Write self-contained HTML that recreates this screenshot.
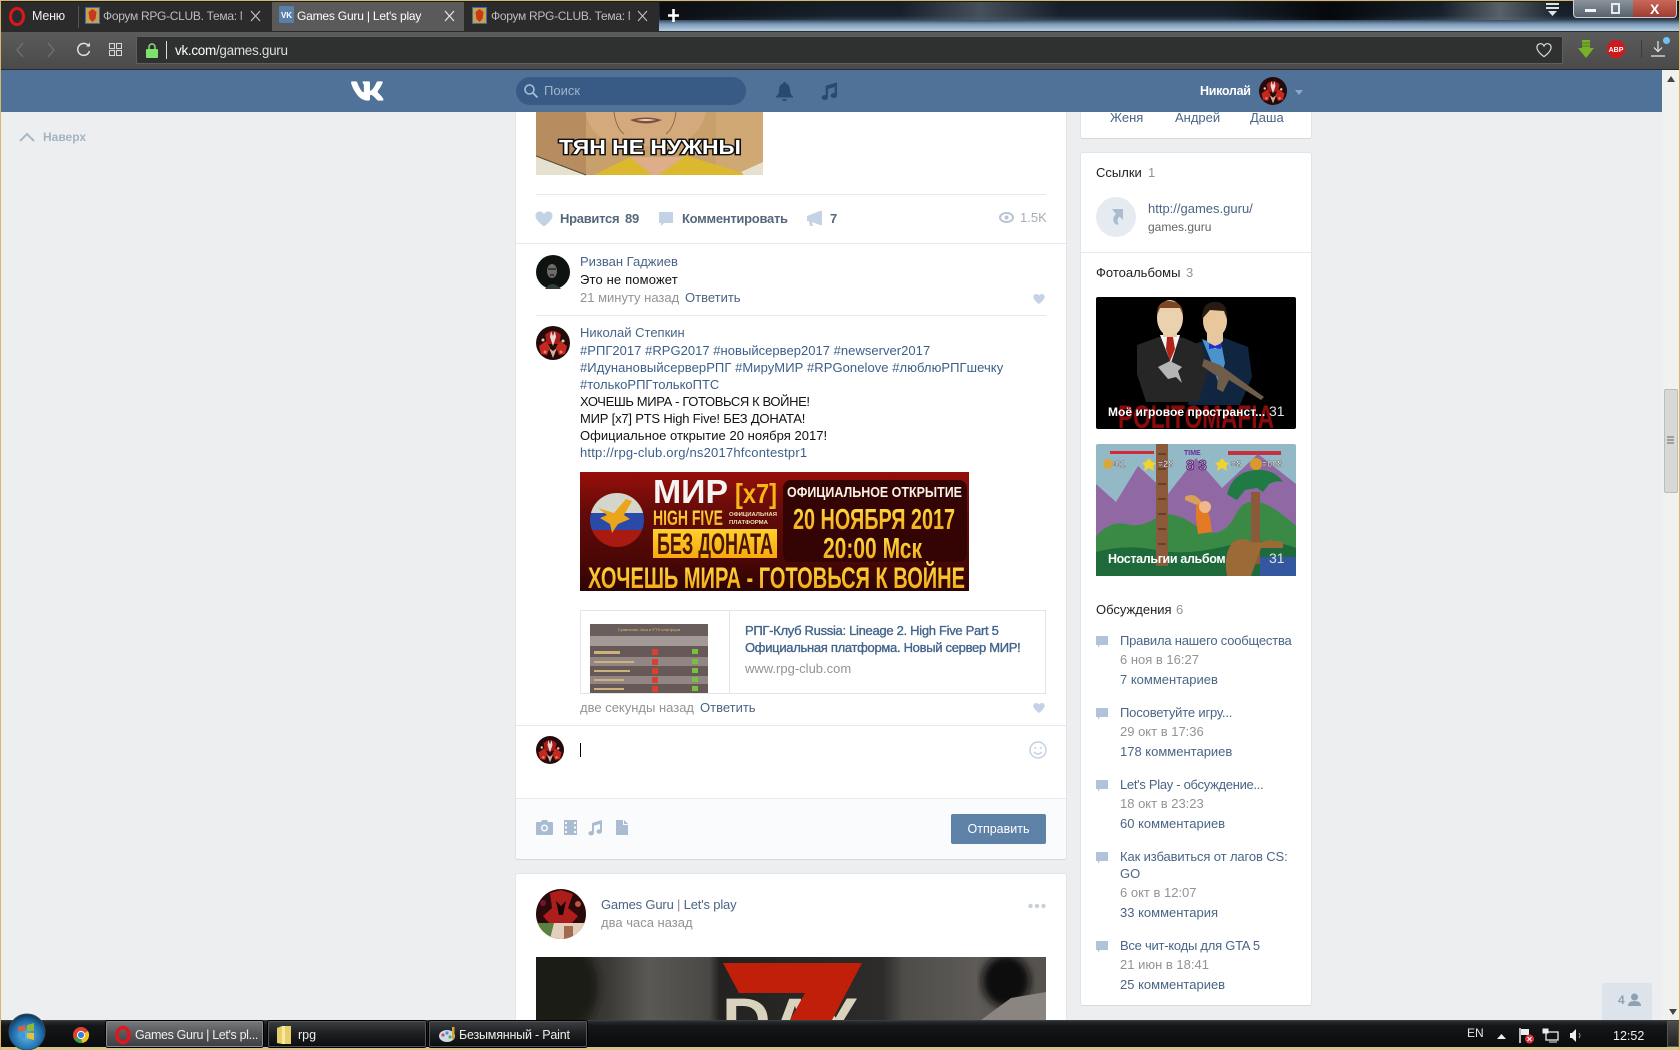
<!DOCTYPE html>
<html lang="ru"><head><meta charset="utf-8"><title>Games Guru | Let's play</title>
<style>
html,body{margin:0;padding:0;width:1680px;height:1050px;overflow:hidden;background:#edeef0}
body{position:relative;font-family:"Liberation Sans","Noto Sans CJK SC",sans-serif;font-size:13px;color:#000}
.a{position:absolute;white-space:nowrap;line-height:16px}
.b{position:absolute}
.l{color:#3b5f88}.n{color:#4a6586}.g{color:#939393}.d{color:#55677d;font-weight:bold;letter-spacing:-.28px}
.tab{position:absolute;top:2px;height:29px;background:#2b2b2b}
.tt{position:absolute;top:7px;font-size:12px;line-height:16px;color:#bdbdbd;white-space:nowrap;letter-spacing:-.2px}
.hr{position:absolute;height:1px;background:#e7e8ec}
.card{position:absolute;background:#fff;box-shadow:0 1px 0 0 #d7d8db,0 0 0 1px #e3e4e8;border-radius:2px}
svg{position:absolute;display:block;overflow:visible}
.tk{position:absolute;top:1021px;height:26px;border-radius:2px;box-shadow:inset 0 0 0 1px #555,0 0 0 1px #000;background:linear-gradient(#3c4044,#1c1e20 50%,#0b0c0d)}
</style></head><body>

<svg width="0" height="0" style="left:0;top:0"><defs>
<symbol id="av" viewBox="0 0 34 34">
<circle cx="17" cy="17" r="17" fill="#240a0a"/>
<path d="M9 9q8-8 16 0l-2 9H11z" fill="#a81d1b"/>
<path d="M15 5l2 5 2-5 1 6-3 9-3-9z" fill="#e9d9d2"/>
<path d="M3 20l7-5 4 6-3 8-6-1zM31 20l-7-5-4 6 3 8 6-1z" fill="#c5281f"/>
<path d="M13 22l4 10 4-10-4 3z" fill="#d8aa98"/>
<circle cx="7" cy="14" r="1.500" fill="#e9c3b5"/><circle cx="27" cy="15" r="1.500" fill="#e9c3b5"/><circle cx="9" cy="26" r="1.500" fill="#f0806a"/><circle cx="25" cy="26" r="1.500" fill="#f0806a"/>
</symbol>
<path id="hh" d="M12 22S2 15 .8 9C0 4 3.500 2 6.500 2 9 2 11 3.500 12 5.500 13 3.500 15 2 17.500 2 20.500 2 24 4 23.200 9 22 15 12 22 12 22z"/>
</defs></svg>

<!-- page area -->
<div class="b" style="left:0;top:112px;width:1662px;height:908px;background:#edeef0"></div>
<div class="b" style="left:0;top:0;width:1px;height:1050px;background:#d8b868;z-index:9"></div>

<!-- left 'up' -->
<svg style="left:19px;top:132px" width="16" height="10" viewBox="0 0 16 10"><path d="M1 9L8 2l7 7" fill="none" stroke="#a9b8c9" stroke-width="2"/></svg>
<div class="a" style="left:43px;top:129px;font-size:12px;font-weight:bold;color:#a3b3c5">Наверх</div>

<!-- main card -->
<div class="card" style="left:516px;top:100px;width:550px;height:759px"></div>
<div class="b" style="left:516px;top:799px;width:550px;height:60px;background:#fafbfc;border-radius:0 0 2px 2px"></div>
<div class="hr" style="left:516px;top:798px;width:550px"></div>
<div class="hr" style="left:516px;top:725px;width:550px"></div>
<div class="hr" style="left:516px;top:243px;width:550px"></div>
<div class="hr" style="left:536px;top:194px;width:510px"></div>
<div class="hr" style="left:536px;top:315px;width:510px"></div>

<!-- meme -->
<svg style="left:536px;top:112px" width="227" height="63" viewBox="0 0 227 63">
<rect width="227" height="63" fill="#c8a06c"/>
<rect x="0" y="0" width="50" height="63" fill="#b78d5f"/>
<rect x="180" y="0" width="47" height="63" fill="#cfa874"/>
<path d="M50 0q2 22 30 34h60q26-12 30-34z" fill="#d4a97c"/>
<path d="M78 0q2 16 10 22M140 0q-2 16-10 22" fill="none" stroke="#8e6a48" stroke-width="1"/>
<path d="M94 8q16-5 32 0q-16 7-32 0z" fill="#7a5040"/><path d="M100 8q10 2 20 0q-10-2-20 0z" fill="#e9d3ba"/>
<path d="M0 44l50 19H0z" fill="#e6e1cf"/><path d="M205 60l22-10v13h-22z" fill="#e6e1cf"/>
<path d="M0 44l50 19" fill="none" stroke="#54483a"/>
<path d="M58 63l36-18 22 18z" fill="#dcb82e"/><path d="M122 63l26-20 59 18v2z" fill="#dcb82e"/>
<path d="M94 45h54l-26 18h-6z" fill="#deae8a"/>
<text x="114" y="42" text-anchor="middle" font-family="Liberation Sans" font-weight="bold" font-size="20" fill="#fff" stroke="#111" stroke-width="2.800" paint-order="stroke" textLength="182" lengthAdjust="spacingAndGlyphs">ТЯН НЕ НУЖНЫ</text>
</svg>

<!-- action row -->
<svg style="left:535px;top:210px" width="18" height="18" viewBox="0 0 24 24"><use href="#hh" fill="#c3d2e4"/></svg>
<div class="a d" style="left:560px;top:211px">Нравится</div>
<div class="a d" style="left:625px;top:211px">89</div>
<svg style="left:659px;top:212px" width="14" height="15" viewBox="0 0 14 15"><path d="M0 0h14v11H5l-3 3v-3H0z" fill="#c3d2e4"/></svg>
<div class="a d" style="left:682px;top:211px">Комментировать</div>
<svg style="left:807px;top:211px" width="15" height="15" viewBox="0 0 15 15"><path d="M0 5l13-5h2v14h-2L5 11l1 4H3L2 10H0z" fill="#c3d2e4"/></svg>
<div class="a d" style="left:830px;top:211px">7</div>
<svg style="left:999px;top:212px" width="15" height="11" viewBox="0 0 15 11"><ellipse cx="7.500" cy="5.500" rx="6.500" ry="4.500" fill="none" stroke="#b7c4d3" stroke-width="2"/><circle cx="7.500" cy="5.500" r="2" fill="#b7c4d3"/></svg>
<div class="a" style="left:1020px;top:210px;color:#a3adb8">1.5K</div>

<!-- comment 1 -->
<svg style="left:536px;top:255px" width="34" height="34" viewBox="0 0 34 34"><circle cx="17" cy="17" r="17" fill="#0e1211"/><ellipse cx="16" cy="16" rx="5" ry="7" fill="#6b6d66"/><path d="M12 14h8M14 20h4" stroke="#1c1c1c" stroke-width="1.300"/><path d="M9 34q7-10 16 0z" fill="#2f3d39"/></svg>
<div class="a n" style="left:580px;top:254px">Ризван Гаджиев</div>
<div class="a" style="left:580px;top:272px;letter-spacing:.15px;color:#111">Это не поможет</div>
<div class="a g" style="left:580px;top:290px">21 минуту назад</div>
<div class="a n" style="left:685px;top:290px">Ответить</div>
<svg style="left:1033px;top:293px" width="12" height="12" viewBox="0 0 24 24"><use href="#hh" fill="#c3d2e4"/></svg>

<!-- comment 2 -->
<svg style="left:536px;top:326px" width="34" height="34"><use href="#av" width="34" height="34"/></svg>
<div class="a n" style="left:580px;top:325px">Николай Степкин</div>
<div class="a l" style="left:580px;top:343px;letter-spacing:.03px">#РПГ2017 #RPG2017 #новыйсервер2017 #newserver2017</div>
<div class="a l" style="left:580px;top:360px;letter-spacing:.06px">#ИдунановыйсерверРПГ #МируМИР #RPGonelove #люблюРПГшечку</div>
<div class="a l" style="left:580px;top:377px">#толькоРПГтолькоПТС</div>
<div class="a" style="left:580px;top:394px;letter-spacing:-.38px;color:#111">ХОЧЕШЬ МИРА - ГОТОВЬСЯ К ВОЙНЕ!</div>
<div class="a" style="left:580px;top:411px;letter-spacing:-.2px;color:#111">МИР [x7] PTS High Five! БЕЗ ДОНАТА!</div>
<div class="a" style="left:580px;top:428px;letter-spacing:.03px;color:#111">Официальное открытие 20 ноября 2017!</div>
<div class="a l" style="left:580px;top:445px;letter-spacing:.2px">http://rpg-club.org/ns2017hfcontestpr1</div>

<!-- banner -->
<svg style="left:580px;top:472px" width="389" height="119" viewBox="0 0 389 119" font-family="Liberation Sans" font-weight="bold">
<defs>
<linearGradient id="bn" x1="0" y1="0" x2="0" y2="1"><stop offset="0" stop-color="#970f0a"/><stop offset=".35" stop-color="#620b08"/><stop offset=".75" stop-color="#4a0705"/><stop offset="1" stop-color="#2b0403"/></linearGradient>
<linearGradient id="go" x1="0" y1="0" x2="0" y2="1"><stop offset="0" stop-color="#ffe14a"/><stop offset="1" stop-color="#f0a00c"/></linearGradient>
<linearGradient id="gr" x1="0" y1="0" x2="0" y2="1"><stop offset="0" stop-color="#ffd12e"/><stop offset="1" stop-color="#f8a80c"/></linearGradient>
<clipPath id="gc"><circle cx="37" cy="48" r="27"/></clipPath>
</defs>
<rect width="389" height="119" fill="url(#bn)"/>
<g clip-path="url(#gc)">
<rect x="10" y="21" width="54" height="20" fill="#d5d6cb"/>
<rect x="10" y="41" width="54" height="17" fill="#2a49a8"/>
<rect x="10" y="58" width="54" height="17" fill="#a81a12"/>
<path d="M18 36l16 5 12-14 6 2-8 14 6 4-12 5-6 9-2-9-10-6 7-3z" fill="#eaa51a"/>
</g>
<text x="73" y="31" font-size="33" fill="#f4f4f4" textLength="75" lengthAdjust="spacingAndGlyphs">МИР</text>
<text x="155" y="31" font-size="28" fill="#f5b716" textLength="42" lengthAdjust="spacingAndGlyphs">[x7]</text>
<text x="73" y="53" font-size="21" fill="url(#go)" textLength="70" lengthAdjust="spacingAndGlyphs">HIGH FIVE</text>
<text x="149" y="44" font-size="5.500" fill="#f4dfb0" textLength="48" lengthAdjust="spacingAndGlyphs">ОФИЦИАЛЬНАЯ</text>
<text x="149" y="52" font-size="5.500" fill="#f4dfb0" textLength="39" lengthAdjust="spacingAndGlyphs">ПЛАТФОРМА</text>
<rect x="73" y="57" width="124" height="29" fill="url(#gr)"/>
<text x="77" y="82" font-size="30" fill="#4a1405" textLength="116" lengthAdjust="spacingAndGlyphs">БЕЗ ДОНАТА</text>
<rect x="203" y="8" width="184" height="82" rx="8" fill="#340404"/>
<text x="207" y="25" font-size="14.500" fill="#fbf3e6" textLength="175" lengthAdjust="spacingAndGlyphs">ОФИЦИАЛЬНОЕ ОТКРЫТИЕ</text>
<text x="213" y="57" font-size="29" fill="url(#go)" textLength="162" lengthAdjust="spacingAndGlyphs">20 НОЯБРЯ 2017</text>
<text x="243" y="86" font-size="29" fill="url(#go)" textLength="99" lengthAdjust="spacingAndGlyphs">20:00 Мск</text>
<text x="8" y="116" font-size="30" fill="url(#go)" textLength="377" lengthAdjust="spacingAndGlyphs">ХОЧЕШЬ МИРА - ГОТОВЬСЯ К ВОЙНЕ</text>
</svg>

<!-- snippet -->
<div class="b" style="left:580px;top:610px;width:464px;height:82px;border:1px solid #e3e4e8"></div>
<div class="b" style="left:729px;top:610px;width:1px;height:83px;background:#e3e4e8"></div>
<svg style="left:590px;top:624px" width="118" height="69" viewBox="0 0 118 69" font-family="Liberation Sans" font-size="4">
<rect width="118" height="69" fill="#8c8280"/>
<rect width="118" height="12" fill="#6a5e5c"/>
<text x="59" y="7" text-anchor="middle" fill="#d5b77a">Сравнение Java и PTS платформ</text>
<rect y="12" width="118" height="10" fill="#a39a98"/>
<rect y="22" width="118" height="11" fill="#665957"/>
<rect y="33" width="118" height="9" fill="#918684"/>
<rect y="42" width="118" height="10" fill="#665957"/>
<rect y="52" width="118" height="8" fill="#918684"/>
<rect y="60" width="118" height="9" fill="#665957"/>
<g fill="#d9402f"><rect x="62" y="25" width="6" height="6"/><rect x="62" y="35" width="6" height="6"/><rect x="62" y="44" width="6" height="6"/><rect x="62" y="53" width="6" height="6"/><rect x="62" y="62" width="6" height="6"/></g>
<g fill="#78c040"><rect x="102" y="25" width="6" height="5"/><rect x="102" y="35" width="6" height="5"/><rect x="102" y="44" width="6" height="5"/><rect x="102" y="53" width="6" height="5"/><rect x="102" y="62" width="6" height="5"/></g>
<g fill="#cdb27e"><rect x="4" y="27" width="26" height="3"/><rect x="4" y="37" width="40" height="2"/><rect x="4" y="46" width="36" height="2"/><rect x="4" y="55" width="30" height="2"/><rect x="4" y="64" width="30" height="2"/></g>
</svg>
<div class="a" style="left:745px;top:623px;color:#42648b;-webkit-text-stroke:.35px #42648b;letter-spacing:-.3px">РПГ-Клуб Russia: Lineage 2. High Five Part 5</div>
<div class="a" style="left:745px;top:640px;color:#42648b;-webkit-text-stroke:.35px #42648b;letter-spacing:-.3px">Официальная платформа. Новый сервер МИР!</div>
<div class="a g" style="left:745px;top:661px">www.rpg-club.com</div>

<div class="a g" style="left:580px;top:700px">две секунды назад</div>
<div class="a n" style="left:700px;top:700px">Ответить</div>
<svg style="left:1033px;top:702px" width="12" height="12" viewBox="0 0 24 24"><use href="#hh" fill="#c3d2e4"/></svg>

<!-- composer -->
<svg style="left:536px;top:736px" width="28" height="28"><use href="#av" width="28" height="28"/></svg>
<div class="b" style="left:580px;top:743px;width:1px;height:14px;background:#000"></div>
<svg style="left:1029px;top:741px" width="18" height="18" viewBox="0 0 18 18"><circle cx="9" cy="9" r="8" fill="none" stroke="#c3d0de" stroke-width="1.400"/><circle cx="6.300" cy="7" r="1" fill="#c3d0de"/><circle cx="11.700" cy="7" r="1" fill="#c3d0de"/><path d="M5 11q4 4 8 0" fill="none" stroke="#c3d0de" stroke-width="1.400"/></svg>

<svg style="left:536px;top:820px" width="17" height="15" viewBox="0 0 17 15"><path d="M1 2h4l1-2h5l1 2h4a1 1 0 0 1 1 1v11a1 1 0 0 1-1 1H1a1 1 0 0 1-1-1V3a1 1 0 0 1 1-1z" fill="#a9bcd1"/><circle cx="8.500" cy="8" r="3.500" fill="#fafbfc"/><circle cx="8.500" cy="8" r="2" fill="#a9bcd1"/></svg>
<svg style="left:564px;top:820px" width="13" height="15" viewBox="0 0 13 15"><path d="M0 0h13v15H0z" fill="#a9bcd1"/><g fill="#fafbfc"><rect x="1" y="2" width="2" height="2"/><rect x="1" y="6.500" width="2" height="2"/><rect x="1" y="11" width="2" height="2"/><rect x="10" y="2" width="2" height="2"/><rect x="10" y="6.500" width="2" height="2"/><rect x="10" y="11" width="2" height="2"/></g></svg>
<svg style="left:587px;top:820px" width="15" height="16" viewBox="0 0 15 16"><path d="M5 3l10-3v11.500a2.800 2.200 0 1 1-2-2.100V4L7 5.800v7.500a2.800 2.200 0 1 1-2-2.100z" fill="#a9bcd1"/></svg>
<svg style="left:616px;top:820px" width="12" height="15" viewBox="0 0 12 15"><path d="M0 0h7v5h5v10H0zM8 0l4 4H8z" fill="#a9bcd1"/></svg>
<div class="b" style="left:951px;top:814px;width:95px;height:30px;background:#5e81a8;border-radius:2px"></div>
<div class="a" style="left:951px;top:821px;width:95px;text-align:center;color:#fff;font-size:12.500px">Отправить</div>

<!-- second post -->
<div class="card" style="left:516px;top:874px;width:550px;height:160px"></div>
<svg style="left:536px;top:889px" width="50" height="50" viewBox="0 0 50 50"><defs><clipPath id="cp"><circle cx="25" cy="25" r="25"/></clipPath></defs><g clip-path="url(#cp)"><rect width="50" height="50" fill="#2a0a0a"/><path d="M14 4l11-3 12 4-5 14 10 8-6 7H13l-6-7 9-8z" fill="#ac1d1b"/><path d="M20 12l5 5 5-5-3 14h-4z" fill="#160707"/><circle cx="7" cy="14" r="3" fill="#771133"/><circle cx="42" cy="15" r="3" fill="#c25245"/><rect y="34" width="50" height="16" fill="#e3cfbb"/><path d="M0 34h18l-4 16H0z" fill="#5b8140"/><path d="M28 37h9v13h-9z" fill="#a06b50"/></g></svg>
<div class="a n" style="left:601px;top:897px;letter-spacing:-.18px">Games Guru <span style="color:#828a95">|</span> Let's play</div>
<div class="a g" style="left:601px;top:915px">два часа назад</div>
<svg style="left:1028px;top:903px" width="18" height="6" viewBox="0 0 18 6"><g fill="#c8d0d9"><circle cx="2.500" cy="3" r="2.200"/><circle cx="9" cy="3" r="2.200"/><circle cx="15.500" cy="3" r="2.200"/></g></svg>
<svg style="left:536px;top:957px;overflow:hidden" width="510" height="63" viewBox="0 0 510 63" font-family="Liberation Sans" font-weight="bold">
<defs><linearGradient id="zb" x1="0" x2="1" y1="0" y2="0"><stop offset="0" stop-color="#222120"/><stop offset=".14" stop-color="#3a3936"/><stop offset=".22" stop-color="#5a5955"/><stop offset=".34" stop-color="#4a4845"/><stop offset=".36" stop-color="#232220"/><stop offset=".68" stop-color="#2e2c2b"/><stop offset=".72" stop-color="#4e4c49"/><stop offset=".86" stop-color="#5e5b57"/><stop offset="1" stop-color="#55514d"/></linearGradient><filter id="bl"><feGaussianBlur stdDeviation="4"/></filter></defs>
<rect width="510" height="63" fill="url(#zb)"/>
<ellipse cx="22" cy="30" rx="40" ry="48" fill="#1b1a19" filter="url(#bl)"/>
<ellipse cx="470" cy="24" rx="24" ry="26" fill="#100f0e" filter="url(#bl)"/>
<path d="M445 63l30-22 35-6v28z" fill="#8a8580"/>
<text x="186" y="87" font-size="66" fill="#d9d3bd" textLength="136" lengthAdjust="spacingAndGlyphs">DAY</text>
<path d="M187 6h139l-30 57h-42l15-27H203z" fill="#c21f0a"/>
</svg>

<!-- right col card 1 -->
<div class="card" style="left:1081px;top:100px;width:230px;height:38px"></div>
<div class="a n" style="left:1110px;top:110px">Женя</div>
<div class="a n" style="left:1175px;top:110px">Андрей</div>
<div class="a n" style="left:1250px;top:110px">Даша</div>

<!-- right col card 2 -->
<div class="card" style="left:1081px;top:153px;width:230px;height:852px"></div>
<div class="hr" style="left:1081px;top:252px;width:230px"></div>
<div class="a" style="left:1096px;top:165px;color:#222">Ссылки</div>
<div class="a g" style="left:1148px;top:165px">1</div>
<svg style="left:1096px;top:197px" width="40" height="40" viewBox="0 0 40 40"><circle cx="20" cy="20" r="20" fill="#e6ebf2"/><path d="M16 12h11v11l-3.500-3.500-1.500 2c-1 2-.5 4 1 6h-3c-3-2-4-6-1-9.500l1-1z" fill="#a9bcd1"/></svg>
<div class="a n" style="left:1148px;top:201px">http://games.guru/</div>
<div class="a" style="left:1148px;top:219px;color:#656565;font-size:12px">games.guru</div>
<div class="a" style="left:1096px;top:265px;color:#222">Фотоальбомы</div>
<div class="a g" style="left:1186px;top:265px">3</div>

<!-- album 1 -->
<svg style="left:1096px;top:297px" width="200" height="132" viewBox="0 0 200 132" font-family="Liberation Sans" font-weight="bold">
<rect width="200" height="132" fill="#000" rx="2"/>
<path d="M100 46l26-6 26 10 4 30-12 28H92z" fill="#10253f"/>
<path d="M106 42l20 8 3 16-6 22-8-24z" fill="#4a93cd"/>
<path d="M111 30h16v14l-8 8-8-8z" fill="#e6c79f"/>
<ellipse cx="119" cy="24" rx="12" ry="16" fill="#e9c79c"/>
<path d="M106 22q0-18 14-17 12 0 11 17l-3-8-14-1z" fill="#2a1b12"/>
<path d="M113 46l6 3 7-3-1 6-6-1-6 1z" fill="#2030c8"/>
<path d="M41 48l22-8 11-2 14 3 18 8 6 26-10 30H50l-9-28z" fill="#262626"/>
<path d="M64 38h20l-9 28z" fill="#f4f4f4"/>
<path d="M71 40h6l2 12-5 12-4-12z" fill="#b32318"/>
<path d="M67 30h14v10H67z" fill="#e2cba6"/>
<ellipse cx="74" cy="21" rx="13" ry="18" fill="#e9d2ad"/>
<path d="M61 18q0-15 13-14t13 14l-3-7H64z" fill="#7a4722"/>
<path d="M62 70l12-6 12 6-4 4 4 12-6-6-8 2z" fill="#b5b5b5"/>
<path d="M108 62l16 6 44 32-3 3-32-20-6 12-6-3 1-12-16-11z" fill="#6f5d49"/>
<text x="22" y="131" font-size="32" fill="#8c0a0a" textLength="156" lengthAdjust="spacingAndGlyphs">POLITOMAFIA</text>
</svg>
<div class="a" style="left:1108px;top:404px;color:#fff;font-weight:bold;font-size:12px;letter-spacing:.05px">Моё игровое пространст...</div>
<div class="a" style="left:1269px;top:403px;color:#dfe3e8;font-size:14px">31</div>

<!-- album 2 -->
<svg style="left:1096px;top:444px" width="200" height="132" viewBox="0 0 200 132" font-family="Liberation Sans" font-weight="bold">
<rect width="200" height="132" fill="#93b8c6" rx="2"/>
<path d="M0 40l20 18 22-36 30 28 28-36 26 30 36-34 38 30v92H0z" fill="#9069a4"/>
<path d="M0 92q15-16 30-12t30-6 40 8 40-12 60 12v50H0z" fill="#3a8a45"/>
<path d="M0 108q30-8 60-2t70-4 70 2v28H0z" fill="#1f6a3a"/>
<rect x="164" y="113" width="36" height="19" fill="#3358a0"/>
<rect x="60" y="0" width="12" height="122" fill="#8b5a3a"/>
<path d="M62 10h8M62 25h8M62 40h8M62 55h8M62 70h8M62 85h8M62 100h8" stroke="#6a402a" stroke-width="2"/>
<rect x="155" y="48" width="9" height="72" fill="#8b5a3a"/>
<path d="M131 50q6-22 28-24 20-1 28 12-6-2-14 2l-6 8-6-4-12 2-8 10-4-2z" fill="#1f7a43"/>
<circle cx="160" cy="20" r="6" fill="#d89a2e"/>
<path d="M89 53q6-4 12 0l6 6-4 3-14-6z" fill="#d9a05a"/>
<path d="M100 60l10 2 4 12 2 14-14 2-2-16z" fill="#e47a24"/>
<ellipse cx="109" cy="63" rx="6" ry="6" fill="#efb88a"/>
<path d="M131 132q-4-22 6-34 10-6 18 0 6 2 18-2l14 2v6h-22l-10 28z" fill="#9c6a36"/>
<g font-size="9" fill="#f2f2f2" stroke="#222" stroke-width=".3"><text x="14" y="23">=01</text><text x="62" y="23">=28</text><text x="135" y="23">=8</text><text x="166" y="23">=008</text></g>
<text x="90" y="26" font-size="15" fill="#c98cd5" stroke="#3a1a55" stroke-width=".7">8 3</text>
<text x="88" y="11" font-size="7" fill="#6a2a9a">TIME</text>
<rect x="132" y="7" width="53" height="4" fill="#c23240"/>
<rect x="14" y="7" width="44" height="3" fill="#d42b3a"/>
<circle cx="12" cy="20" r="5" fill="#d8a83b"/><path d="M53 14l3 4 4 1-3 3 1 5-5-3-5 3 1-5-3-3 4-1z" fill="#f2d22e"/><path d="M126 14l3 4 4 1-3 3 1 5-5-3-5 3 1-5-3-3 4-1z" fill="#f2d22e"/>
</svg>
<div class="a" style="left:1108px;top:551px;color:#fff;font-weight:bold;font-size:12.500px;letter-spacing:-.35px">Ностальгии альбом</div>
<div class="a" style="left:1269px;top:550px;color:#dfe3e8;font-size:14px">31</div>

<!-- discussions -->
<div class="a" style="left:1096px;top:602px;color:#222">Обсуждения</div>
<div class="a g" style="left:1176px;top:602px">6</div>

<svg style="left:1096px;top:636px" width="12" height="12" viewBox="0 0 12 12"><path d="M0 0h12v9H4l-2 2.500V9H0z" fill="#b0c3d9"/></svg>
<div class="a n" style="left:1120px;top:633px;letter-spacing:-.2px">Правила нашего сообщества</div>
<div class="a g" style="left:1120px;top:652px">6 ноя в 16:27</div>
<div class="a n" style="left:1120px;top:672px">7 комментариев</div>

<svg style="left:1096px;top:708px" width="12" height="12" viewBox="0 0 12 12"><path d="M0 0h12v9H4l-2 2.500V9H0z" fill="#b0c3d9"/></svg>
<div class="a n" style="left:1120px;top:705px;letter-spacing:-.18px">Посоветуйте игру...</div>
<div class="a g" style="left:1120px;top:724px">29 окт в 17:36</div>
<div class="a n" style="left:1120px;top:744px">178 комментариев</div>

<svg style="left:1096px;top:780px" width="12" height="12" viewBox="0 0 12 12"><path d="M0 0h12v9H4l-2 2.500V9H0z" fill="#b0c3d9"/></svg>
<div class="a n" style="left:1120px;top:777px;letter-spacing:-.3px">Let's Play - обсуждение...</div>
<div class="a g" style="left:1120px;top:796px">18 окт в 23:23</div>
<div class="a n" style="left:1120px;top:816px">60 комментариев</div>

<svg style="left:1096px;top:852px" width="12" height="12" viewBox="0 0 12 12"><path d="M0 0h12v9H4l-2 2.500V9H0z" fill="#b0c3d9"/></svg>
<div class="a n" style="left:1120px;top:849px;letter-spacing:-.12px">Как избавиться от лагов CS:</div>
<div class="a n" style="left:1120px;top:866px">GO</div>
<div class="a g" style="left:1120px;top:885px">6 окт в 12:07</div>
<div class="a n" style="left:1120px;top:905px">33 комментария</div>

<svg style="left:1096px;top:941px" width="12" height="12" viewBox="0 0 12 12"><path d="M0 0h12v9H4l-2 2.500V9H0z" fill="#b0c3d9"/></svg>
<div class="a n" style="left:1120px;top:938px;letter-spacing:-.25px">Все чит-коды для GTA 5</div>
<div class="a g" style="left:1120px;top:957px">21 июн в 18:41</div>
<div class="a n" style="left:1120px;top:977px">25 комментариев</div>

<!-- floating friends box -->
<div class="b" style="left:1602px;top:983px;width:50px;height:37px;background:#dde3ea;border-radius:3px 3px 0 0"></div>
<div class="a" style="left:1618px;top:992px;font-size:12px;font-weight:bold;color:#8ea0b4">4</div>
<svg style="left:1628px;top:993px" width="13" height="13" viewBox="0 0 13 13"><circle cx="6.500" cy="4" r="3.500" fill="#8ea0b4"/><path d="M0 13q0-5 6.500-5t6.500 5z" fill="#8ea0b4"/></svg>

<!-- scrollbar -->
<div class="b" style="left:1662px;top:70px;width:18px;height:950px;background:#f1f1f0"></div>
<div class="b" style="left:1664px;top:389px;width:14px;height:104px;background:#d8d8d8;border:1px solid #bcbcbc;box-sizing:border-box;border-radius:2px"></div>
<svg style="left:1667px;top:436px" width="7" height="8" viewBox="0 0 7 8"><path d="M0 1h7M0 4h7M0 7h7" stroke="#666"/></svg>
<svg style="left:1667px;top:76px" width="8" height="6" viewBox="0 0 8 6"><path d="M4 0l4 6H0z" fill="#444"/></svg>
<svg style="left:1669px;top:1009px" width="8" height="6" viewBox="0 0 8 6"><path d="M4 6L8 0H0z" fill="#444"/></svg>
<div class="b" style="left:1679px;top:0;width:1px;height:1050px;background:#d8b868;z-index:9"></div>

<!-- VK header -->
<div class="b" style="left:0;top:70px;width:1662px;height:42px;background:#507299"></div>
<svg style="left:351px;top:80px" width="33" height="21" viewBox="4 7 16.300 10.200"><path d="M19.376 17.123h-1.744c-.66 0-.864-.525-2.050-1.727-1.033-1-1.490-1.135-1.744-1.135-.356 0-.458.102-.458.593v1.575c0 .424-.135.678-1.253.678-1.846 0-3.896-1.118-5.335-3.202C4.624 10.857 4.030 8.570 4.030 8.096c0-.254.102-.491.593-.491h1.744c.44 0 .61.203.78.677.863 2.490 2.303 4.675 2.896 4.675.22 0 .322-.102.322-.66V9.721c-.068-1.186-.695-1.287-.695-1.710 0-.204.17-.407.44-.407h2.744c.373 0 .508.203.508.643v3.473c0 .372.17.508.271.508.22 0 .407-.136.813-.542 1.254-1.406 2.151-3.574 2.151-3.574.119-.254.322-.491.763-.491h1.744c.525 0 .644.27.525.643-.22 1.017-2.354 4.031-2.354 4.031-.186.305-.254.44 0 .78.186.254.796.779 1.203 1.253.745.847 1.320 1.558 1.473 2.050.17.49-.085.744-.576.744z" fill="#fff"/></svg>
<div class="b" style="left:516px;top:77px;width:230px;height:28px;border-radius:14px;background:#375b85"></div>
<svg style="left:524px;top:84px" width="14" height="14" viewBox="0 0 14 14"><circle cx="5.500" cy="5.500" r="4.500" fill="none" stroke="#a8bdd4" stroke-width="1.600"/><path d="M9 9l4.500 4.500" stroke="#a8bdd4" stroke-width="1.800"/></svg>
<div class="a" style="left:544px;top:83px;color:#9fb4cc">Поиск</div>
<svg style="left:776px;top:82px" width="17" height="19" viewBox="0 0 17 19"><path d="M8.500 0c1 0 1.500.7 1.500 1.500 3 1 4 3.500 4 6.500 0 3 1 5 3 6.500v1H0v-1c2-1.500 3-3.500 3-6.500s1-5.500 4-6.500C7 .7 7.500 0 8.500 0z" fill="#274a72"/><path d="M6 17h5a2.500 2 0 0 1-5 0z" fill="#274a72"/></svg>
<svg style="left:820px;top:82px" width="17" height="19" viewBox="0 0 15 16"><path d="M5 3l10-3v11.500a2.800 2.200 0 1 1-2-2.100V4L7 5.800v7.500a2.800 2.200 0 1 1-2-2.100z" fill="#274a72"/></svg>
<div class="a" style="left:1200px;top:83px;color:#fff;font-weight:bold;font-size:12.500px;letter-spacing:-.3px">Николай</div>
<svg style="left:1259px;top:77px" width="28" height="28"><use href="#av" width="28" height="28"/></svg>
<svg style="left:1295px;top:90px" width="8" height="5" viewBox="0 0 8 5"><path d="M0 0h8L4 5z" fill="#8fa8c4"/></svg>

<!-- browser chrome -->
<div class="b" style="left:0;top:0;width:1680px;height:31px;background:linear-gradient(#141c24 0,#18222c 50%,#2a3a4a 62%,#7c9ab8 78%,#b6cfe4 100%)"></div>
<div class="b" style="left:660px;top:2px;width:180px;height:18px;background:linear-gradient(90deg,#0a0d12,rgba(10,13,18,0))"></div>
<div class="b" style="left:900px;top:2px;width:160px;height:18px;background:linear-gradient(90deg,rgba(90,100,112,0),rgba(90,100,112,.7),rgba(90,100,112,0))"></div>
<div class="b" style="left:1220px;top:2px;width:220px;height:18px;background:linear-gradient(90deg,rgba(5,8,12,0),#05080c,rgba(5,8,12,0))"></div>
<div class="b" style="left:1440px;top:2px;width:120px;height:18px;background:linear-gradient(90deg,rgba(105,112,120,0),rgba(105,112,120,.8),rgba(105,112,120,0))"></div>
<div class="b" style="left:0;top:0;width:1680px;height:1px;background:#d8b868"></div>

<div class="tab" style="left:1px;width:271px"></div>
<svg style="left:9px;top:7px" width="16" height="19" viewBox="0 0 16 19"><ellipse cx="8" cy="9.500" rx="6.500" ry="8" fill="none" stroke="#e0161f" stroke-width="3"/></svg>
<div class="tt" style="left:32px;color:#f0f0f0;font-size:12.500px;top:8px">Меню</div>
<div class="b" style="left:78px;top:6px;width:1px;height:22px;background:#555"></div>

<svg style="left:85px;top:7px" width="15" height="17" viewBox="0 0 15 17"><rect width="15" height="17" fill="#3a6ab0"/><rect x="1" y="1" width="13" height="15" fill="#c9a14a"/><path d="M7.500 2l4 3-1 7-3 3-3-3-1-7z" fill="#c8381c"/></svg>
<div class="tt" style="left:103px;top:8px;width:139px;overflow:hidden;letter-spacing:-.3px">Форум RPG-CLUB. Тема: Мир</div>
<svg style="left:250px;top:10px" width="11" height="12" viewBox="0 0 11 12"><path d="M1 1l9 10M10 1L1 11" stroke="#bbb" stroke-width="1.200"/></svg>

<div class="tab" style="left:272px;width:192px;background:#5a5a5a"></div>
<svg style="left:279px;top:6px" width="15" height="17" viewBox="0 0 15 17"><rect width="15" height="17" fill="#5a80aa" rx="1"/><text x="7.500" y="12" text-anchor="middle" font-family="Liberation Sans" font-size="8" font-weight="bold" fill="#fff">VK</text></svg>
<div class="tt" style="left:297px;top:8px;color:#fff">Games Guru | Let's play</div>
<svg style="left:444px;top:10px" width="11" height="12" viewBox="0 0 11 12"><path d="M1 1l9 10M10 1L1 11" stroke="#e8e8e8" stroke-width="1.200"/></svg>

<div class="tab" style="left:464px;width:195px"></div>
<svg style="left:472px;top:7px" width="15" height="17" viewBox="0 0 15 17"><rect width="15" height="17" fill="#3a6ab0"/><rect x="1" y="1" width="13" height="15" fill="#c9a14a"/><path d="M7.500 2l4 3-1 7-3 3-3-3-1-7z" fill="#c8381c"/></svg>
<div class="tt" style="left:491px;top:8px;width:139px;overflow:hidden;letter-spacing:-.3px">Форум RPG-CLUB. Тема: Мир</div>
<svg style="left:637px;top:10px" width="11" height="12" viewBox="0 0 11 12"><path d="M1 1l9 10M10 1L1 11" stroke="#bbb" stroke-width="1.200"/></svg>
<svg style="left:668px;top:9px" width="11" height="13" viewBox="0 0 11 13"><path d="M5.500 0v13M0 6.500h11" stroke="#fff" stroke-width="2.600"/></svg>

<!-- window controls -->
<svg style="left:1546px;top:3px" width="13" height="14" viewBox="0 0 13 14"><path d="M0 1h13M0 5h13" stroke="#dfe3e6" stroke-width="2"/><path d="M2 8h9l-4.500 5z" fill="#dfe3e6"/></svg>
<div class="b" style="left:1573px;top:0;width:104px;height:18px;border:1px solid #c8d2da;border-top:0;border-radius:0 0 4px 4px;box-sizing:border-box;overflow:hidden;background:linear-gradient(#8a939c,#58626c)">
<div class="b" style="left:59px;top:0;width:44px;height:18px;background:linear-gradient(#c9685a,#9c3a2e)"></div>
</div>
<div class="b" style="left:1585px;top:9px;width:11px;height:3px;background:#f2f4f7"></div>
<div class="b" style="left:1611px;top:3px;width:9px;height:11px;border:2px solid #e6e9ee;box-sizing:border-box"></div>
<div class="a" style="left:1650px;top:1px;color:#fff;font-weight:bold;font-size:14px">X</div>

<!-- toolbar -->
<div class="b" style="left:0;top:31px;width:1680px;height:39px;background:linear-gradient(#5b5b5b,#4a4a4a);border-top:1px solid #2a2a2a;border-bottom:1px solid #2a2a2a;box-sizing:border-box"></div>
<svg style="left:15px;top:42px" width="10" height="16" viewBox="0 0 10 16"><path d="M8 1L2 8l6 7" fill="none" stroke="#6e6e6e" stroke-width="1.500"/></svg>
<svg style="left:46px;top:42px" width="10" height="16" viewBox="0 0 10 16"><path d="M2 1l6 7-6 7" fill="none" stroke="#6e6e6e" stroke-width="1.500"/></svg>
<svg style="left:76px;top:42px" width="15" height="15" viewBox="0 0 15 15"><path d="M13 4.500A6 6 0 1 0 13.500 9" fill="none" stroke="#e0e0e0" stroke-width="1.500"/><path d="M10 4.500h4V.500z" fill="#e0e0e0"/></svg>
<svg style="left:109px;top:43px" width="13" height="13" viewBox="0 0 13 13"><g fill="none" stroke="#d8d8d8"><rect x=".5" y=".5" width="5" height="5"/><rect x="7.500" y=".5" width="5" height="5"/><rect x=".5" y="7.500" width="5" height="5"/><rect x="7.500" y="7.500" width="5" height="5"/></g></svg>
<div class="b" style="left:137px;top:37px;width:1425px;height:26px;background:#2f3130;box-shadow:0 0 0 1px #5f5f5f"></div>
<svg style="left:146px;top:43px" width="12" height="15" viewBox="0 0 12 15"><path d="M3 7V4a3 3 0 0 1 6 0v3" fill="none" stroke="#8edb7e" stroke-width="1.500"/><rect y="6" width="12" height="9" rx="1" fill="#7fe26f"/></svg>
<div class="b" style="left:166px;top:41px;width:1px;height:18px;background:#ddd"></div>
<div class="a" style="left:175px;top:43px;color:#fff;font-size:13.500px;letter-spacing:-.3px">vk.com<span style="color:#dcdcdc">/games.guru</span></div>
<svg style="left:1536px;top:42px" width="16" height="16" viewBox="0 0 24 24"><path d="M12 22S2 15 1.500 9C1 4.500 4 2.500 7 2.500 9.500 2.500 11 4 12 6c1-2 2.500-3.500 5-3.500 3 0 6 2 5.500 6.500C22 15 12 22 12 22z" fill="none" stroke="#dcdcdc" stroke-width="1.800"/></svg>
<svg style="left:1578px;top:40px" width="16" height="18" viewBox="0 0 16 18"><path d="M4 0h8v8h4l-8 10L0 8h4z" fill="#78b02a"/><path d="M4 3h8M4 6h8" stroke="#4f7a18"/></svg>
<svg style="left:1607px;top:40px" width="18" height="18" viewBox="0 0 18 18"><path d="M5.500 0h7L18 5.500v7L12.500 18h-7L0 12.500v-7z" fill="#cc1a1e"/><text x="9" y="12" text-anchor="middle" font-family="Liberation Sans" font-size="7" font-weight="bold" fill="#fff">ABP</text></svg>
<div class="b" style="left:1641px;top:40px;width:1px;height:18px;background:#3c3c3c"></div>
<svg style="left:1651px;top:41px" width="14" height="16" viewBox="0 0 14 16"><path d="M7 0v10M3 6.500l4 4 4-4M0 15h14" fill="none" stroke="#e8e8e8" stroke-width="1.200"/></svg>
<div class="b" style="left:1663px;top:37px;width:7px;height:7px;border-radius:50%;background:#6fc4f4"></div>

<!-- taskbar -->
<div class="b" style="left:0;top:1020px;width:1680px;height:30px;background:linear-gradient(#2c2f33 0,#15171a 15%,#08090a 100%);border-top:1px solid #3a3d40;box-sizing:border-box"></div>
<div class="b" style="left:0;top:1047px;width:1680px;height:3px;background:#d8c48c"></div>
<svg style="left:8px;top:1014px" width="38" height="36" viewBox="0 0 38 36"><defs><radialGradient id="orb" cx=".5" cy=".6" r=".6"><stop offset="0" stop-color="#5fb8e8"/><stop offset=".7" stop-color="#1d6aa8"/><stop offset="1" stop-color="#10314c"/></radialGradient></defs><circle cx="19" cy="18" r="18" fill="url(#orb)" stroke="#30506a"/><path d="M10 13l7-2v6h-7z" fill="#d8613a"/><path d="M19 11l7-2v8h-7z" fill="#8ab83a"/><path d="M10 19h7v6l-7-2z" fill="#3a9ae0"/><path d="M19 19h7v7l-7-2z" fill="#e8c22e"/></svg>
<svg style="left:73px;top:1027px" width="16" height="16" viewBox="0 0 16 16"><circle cx="8" cy="8" r="8" fill="#e0402f"/><path d="M8 8L1 12a8 8 0 0 0 8 4z" fill="#35a04a"/><path d="M8 8l7-4a8 8 0 0 1-6 12z" fill="#f4c21e"/><circle cx="8" cy="8" r="3.600" fill="#3a7fe0" stroke="#fff"/></svg>
<div class="tk" style="left:106px;width:157px;background:linear-gradient(#77797c,#55585a 48%,#3b3d40);box-shadow:inset 0 0 0 1px #8a8a8a,0 0 0 1px #000"></div>
<svg style="left:115px;top:1026px" width="16" height="18" viewBox="0 0 16 18"><ellipse cx="8" cy="9" rx="6" ry="7.500" fill="none" stroke="#e0161f" stroke-width="3.500"/></svg>
<div class="a" style="left:135px;top:1027px;color:#eee;font-size:12.500px;letter-spacing:-.35px">Games Guru | Let's pl...</div>
<div class="tk" style="left:268px;width:158px"></div>
<svg style="left:277px;top:1026px" width="14" height="18" viewBox="0 0 14 18"><path d="M0 2l5-2h9v18H5l-5-1z" fill="#e8cf6a"/><rect x="5" width="3" height="18" fill="#f8eaa6"/></svg>
<div class="a" style="left:298px;top:1027px;color:#eee;font-size:12.500px">rpg</div>
<div class="tk" style="left:429px;width:158px"></div>
<svg style="left:439px;top:1027px" width="17" height="15" viewBox="0 0 17 15"><ellipse cx="8" cy="9" rx="8" ry="6" fill="#c9dcec"/><circle cx="4" cy="8" r="1.600" fill="#e04a3a"/><circle cx="8" cy="6" r="1.600" fill="#4a90d8"/><circle cx="11" cy="10" r="1.600" fill="#5ab04a"/><rect x="13" width="2.500" height="12" fill="#e0a030"/></svg>
<div class="a" style="left:459px;top:1027px;color:#eee;font-size:12.500px;letter-spacing:-.2px">Безымянный - Paint</div>
<div class="a" style="left:1467px;top:1025px;color:#e6e6e6;font-size:12px">EN</div>
<svg style="left:1497px;top:1034px" width="9" height="5" viewBox="0 0 9 5"><path d="M4.500 0L9 5H0z" fill="#eee"/></svg>
<svg style="left:1519px;top:1028px" width="15" height="16" viewBox="0 0 15 16"><path d="M1 0v15" stroke="#eee" stroke-width="1.500"/><path d="M2 1h8v6H2z" fill="#eee"/><circle cx="10.500" cy="11" r="4.500" fill="#d8323c"/><path d="M8.500 9l4 4M12.500 9l-4 4" stroke="#fff"/></svg>
<svg style="left:1543px;top:1029px" width="15" height="14" viewBox="0 0 15 14"><rect x="3" y="3" width="12" height="8" fill="none" stroke="#eee" stroke-width="1.300"/><path d="M0 0h5v4H0zM6 13h8" stroke="#eee" fill="#eee"/></svg>
<svg style="left:1570px;top:1029px" width="12" height="13" viewBox="0 0 12 13"><path d="M0 4h2l4-4v13L2 9H0z" fill="#eee"/><path d="M9 4q2 2.500 0 5" fill="none" stroke="#999"/></svg>
<div class="a" style="left:1613px;top:1028px;color:#f0f0f0;font-size:12.500px">12:52</div>
<div class="b" style="left:1667px;top:1021px;width:12px;height:26px;background:linear-gradient(#4a4a4a,#222);border:1px solid #555;box-sizing:border-box"></div>
</body></html>
